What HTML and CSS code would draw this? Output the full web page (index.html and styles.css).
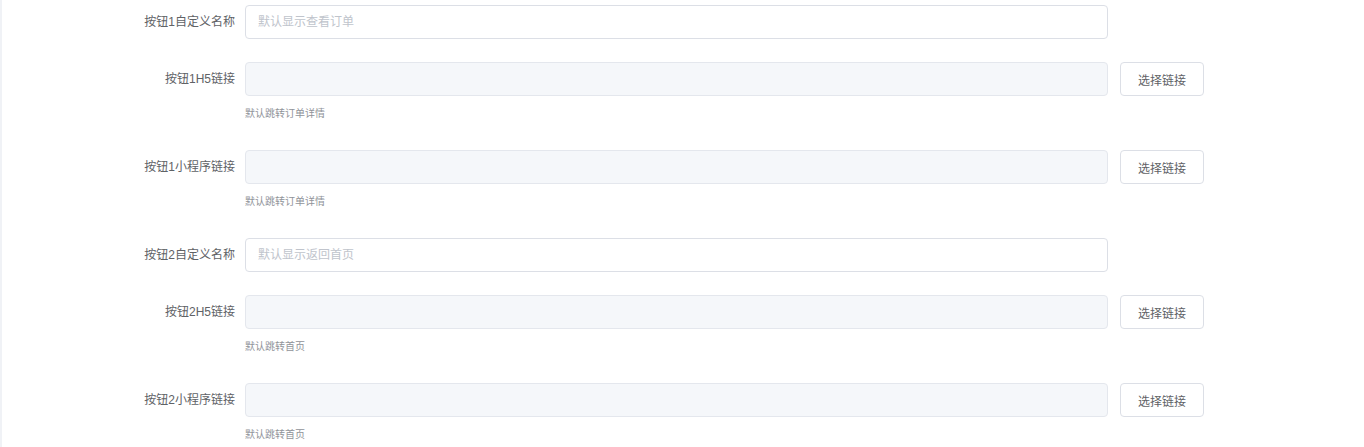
FILE: index.html
```html
<!DOCTYPE html>
<html lang="zh-CN">
<head>
<meta charset="utf-8">
<title>按钮设置</title>
<link rel="stylesheet" href="styles.css">
</head>
<body>
<div class="page">
  <form class="form">
    <div class="item">
      <label class="label">按钮1自定义名称</label>
      <div class="content">
        <div class="row">
          <input class="input" type="text" placeholder="默认显示查看订单">
        </div>
      </div>
    </div>
    <div class="item">
      <label class="label">按钮1H5链接</label>
      <div class="content">
        <div class="row">
          <input class="input disabled" type="text" disabled>
          <button type="button" class="btn">选择链接</button>
        </div>
        <div class="help">默认跳转订单详情</div>
      </div>
    </div>
    <div class="item">
      <label class="label">按钮1小程序链接</label>
      <div class="content">
        <div class="row">
          <input class="input disabled" type="text" disabled>
          <button type="button" class="btn">选择链接</button>
        </div>
        <div class="help">默认跳转订单详情</div>
      </div>
    </div>
    <div class="item">
      <label class="label">按钮2自定义名称</label>
      <div class="content">
        <div class="row">
          <input class="input" type="text" placeholder="默认显示返回首页">
        </div>
      </div>
    </div>
    <div class="item">
      <label class="label">按钮2H5链接</label>
      <div class="content">
        <div class="row">
          <input class="input disabled" type="text" disabled>
          <button type="button" class="btn">选择链接</button>
        </div>
        <div class="help">默认跳转首页</div>
      </div>
    </div>
    <div class="item">
      <label class="label">按钮2小程序链接</label>
      <div class="content">
        <div class="row">
          <input class="input disabled" type="text" disabled>
          <button type="button" class="btn">选择链接</button>
        </div>
        <div class="help">默认跳转首页</div>
      </div>
    </div>
  </form>
</div>
</body>
</html>
```

FILE: styles.css
```css
* { box-sizing: border-box; }
html, body {
  margin: 0;
  padding: 0;
  background: #fff;
}
body {
  font-family: "Liberation Sans", "Noto Sans CJK SC", sans-serif;
  font-size: 12px;
  color: #606266;
}
.page {
  height: 447px;
  overflow: hidden;
  border-left: 2px solid #f0f2f6;
  padding-top: 5px;
}
.form {
  display: flex;
  flex-direction: column;
}
.item {
  display: flex;
  align-items: flex-start;
  margin-bottom: 23px;
}
.label {
  width: 243px;
  flex: none;
  text-align: right;
  padding-right: 10px;
  line-height: 34px;
  height: 34px;
  font-size: 12px;
  color: #606266;
}
.content {
  display: flex;
  flex-direction: column;
}
.row {
  display: flex;
  align-items: center;
}
.input {
  width: 863px;
  height: 34px;
  border: 1px solid #dcdfe6;
  border-radius: 4px;
  padding: 0 12px;
  font-family: inherit;
  font-size: 12px;
  color: #606266;
  background: #fff;
  outline: none;
}
.input::placeholder {
  color: #c0c4cc;
}
.input.disabled {
  background: #f5f7fa;
  border-color: #e4e7ed;
}
.btn {
  margin-left: 12px;
  width: 84px;
  height: 34px;
  border: 1px solid #dcdfe6;
  border-radius: 4px;
  background: #fff;
  color: #606266;
  font-family: inherit;
  font-size: 12px;
  padding: 0;
}
.help {
  margin-top: 11px;
  font-size: 10px;
  line-height: 14px;
  height: 14px;
  color: #909399;
  margin-bottom: 6px;
}
```
